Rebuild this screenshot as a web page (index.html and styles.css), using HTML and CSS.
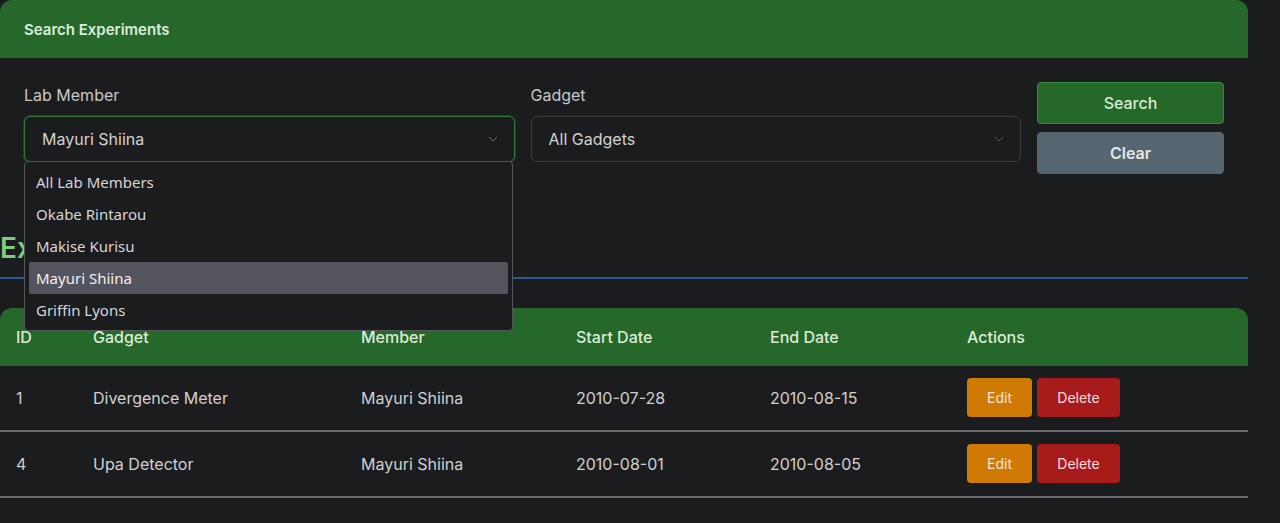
FILE: index.html
```html
<!DOCTYPE html>
<html>
<head>
<meta charset="utf-8">
<link rel="stylesheet" href="styles.css">
</head>
<body>
<div class="page">
  <section class="card">
    <div class="card-header">Search Experiments</div>
    <div class="card-body">
      <div class="field">
        <label class="label">Lab Member</label>
        <div class="select-wrap">
          <div class="select focused">
            <span>Mayuri Shiina</span>
            <svg class="chev" width="10" height="6" viewBox="0 0 10 6"><polyline points="1,1 5,5 9,1" fill="none" stroke="#6d6e72" stroke-width="1"/></svg>
          </div>
          <ul class="dropdown">
            <li>All Lab Members</li>
            <li>Okabe Rintarou</li>
            <li>Makise Kurisu</li>
            <li class="active">Mayuri Shiina</li>
            <li>Griffin Lyons</li>
          </ul>
        </div>
      </div>
      <div class="field">
        <label class="label">Gadget</label>
        <div class="select">
          <span>All Gadgets</span>
          <svg class="chev" width="10" height="6" viewBox="0 0 10 6"><polyline points="1,1 5,5 9,1" fill="none" stroke="#5a5b5f" stroke-width="1"/></svg>
        </div>
      </div>
      <div class="actions">
        <button class="btn btn-search">Search</button>
        <button class="btn btn-clear">Clear</button>
      </div>
    </div>
  </section>

  <h2 class="title">Experiments</h2>

  <table class="table">
    <thead>
      <tr>
        <th class="c-id">ID</th>
        <th class="c-gadget">Gadget</th>
        <th class="c-member">Member</th>
        <th class="c-start">Start Date</th>
        <th class="c-end">End Date</th>
        <th class="c-act">Actions</th>
      </tr>
    </thead>
    <tbody>
      <tr>
        <td>1</td>
        <td>Divergence Meter</td>
        <td>Mayuri Shiina</td>
        <td>2010-07-28</td>
        <td>2010-08-15</td>
        <td><div class="row-actions"><button class="sbtn edit">Edit</button><button class="sbtn del">Delete</button></div></td>
      </tr>
      <tr>
        <td>4</td>
        <td>Upa Detector</td>
        <td>Mayuri Shiina</td>
        <td>2010-08-01</td>
        <td>2010-08-05</td>
        <td><div class="row-actions"><button class="sbtn edit">Edit</button><button class="sbtn del">Delete</button></div></td>
      </tr>
    </tbody>
  </table>
</div>
</body>
</html>
```

FILE: styles.css
```css
* { box-sizing: border-box; }
html, body {
  margin: 0;
  padding: 0;
  background: #1b1c1e;
  color: #d2d2d2;
  font-family: Inter, "Liberation Sans", sans-serif;
  overflow: hidden;
}
.page {
  width: 1248px;
}
.card {
  border-radius: 12px 12px 0 0;
}
.card-header {
  background: #25682a;
  color: #dcebd9;
  height: 58px;
  padding: 0 24px;
  display: flex;
  align-items: center;
  font-size: 15px;
  font-weight: 600;
  border-radius: 12px 12px 0 0;
}
.card-body {
  display: grid;
  grid-template-columns: 1fr 1fr 187px;
  column-gap: 16px;
  padding: 26px 24px 25px;
  align-items: start;
}
.label {
  display: block;
  font-size: 16px;
  line-height: 22px;
  color: #c8c8c8;
  margin-bottom: 10px;
}
.field {
  min-width: 0;
}
.select-wrap {
  position: relative;
}
.select {
  height: 46px;
  border: 1px solid #3a3b3f;
  border-radius: 6px;
  display: flex;
  align-items: center;
  justify-content: space-between;
  padding: 0 16px 0 17px;
  font-size: 16px;
  color: #d2d2d2;
  background: #1b1c1e;
}
.select.focused {
  border-color: #2f7a34;
  box-shadow: 0 0 0 1px rgba(47, 122, 52, 0.35);
}
.chev { flex: none; }
.dropdown {
  position: absolute;
  left: 0;
  top: 45px;
  width: 489px;
  margin: 0;
  padding: 4px;
  list-style: none;
  background: #1b1c1e;
  border: 1px solid #56575b;
  border-radius: 4px;
  font-family: "Noto Sans", "Open Sans", sans-serif;
  font-size: 15px;
  color: #d6d6d6;
  z-index: 10;
}
.dropdown li {
  height: 32px;
  line-height: 32px;
  padding: 0 7px;
  border-radius: 2px;
}
.dropdown li.active {
  background: #54545e;
  color: #f0f0f0;
}
.actions {
  display: flex;
  flex-direction: column;
  gap: 8px;
  margin-top: -2px;
}
.btn {
  height: 42px;
  border-radius: 4px;
  font-family: Inter, "Liberation Sans", sans-serif;
  font-size: 16px;
  font-weight: 500;
  cursor: pointer;
}
.btn-search {
  background: #25682a;
  color: #d5ebd3;
  border: 1px solid #3a8a3e;
}
.btn-clear {
  background: #566670;
  color: #e4e6e8;
  border: 1px solid #566670;
  font-weight: 600;
}
.title {
  margin: 32px 0 29px;
  padding-bottom: 12px;
  font-size: 28px;
  line-height: 34px;
  font-weight: 600;
  color: #7ccf7a;
  border-bottom: 2px solid #2a5a96;
}
.table {
  width: 1248px;
  border-collapse: separate;
  border-spacing: 0;
  font-size: 16px;
}
.table th {
  background: #25682a;
  color: #dcebd9;
  font-weight: 500;
  text-align: left;
  height: 58px;
  padding: 0 16px;
}
.table th:first-child { border-top-left-radius: 12px; }
.table th:last-child { border-top-right-radius: 12px; }
.table td {
  height: 66px;
  padding: 0 16px 1px;
  color: #d0d0d0;
  border-bottom: 2px solid #6a6a6c;
}
.c-id { width: 77px; }
.c-gadget { width: 268px; }
.c-member { width: 215px; }
.c-start { width: 194px; }
.c-end { width: 197px; }
.row-actions {
  display: flex;
  gap: 5px;
}
.sbtn {
  height: 39px;
  border: none;
  border-radius: 4px;
  font-family: Inter, "Liberation Sans", sans-serif;
  font-size: 14px;
  color: #f3e8dd;
  cursor: pointer;
}
.sbtn.edit {
  width: 65px;
  background: #d07a06;
}
.sbtn.del {
  width: 83px;
  background: #a81b1b;
  color: #f4dede;
}
```
